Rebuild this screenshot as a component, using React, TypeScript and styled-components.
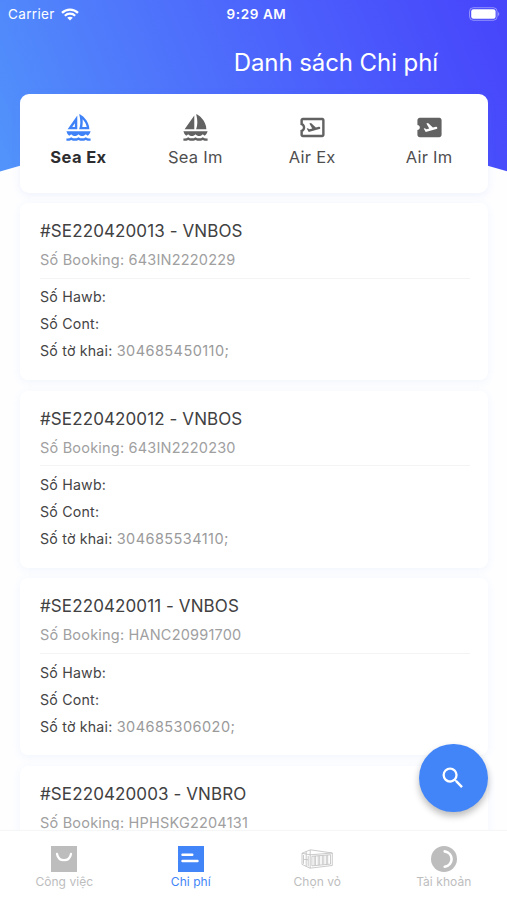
import React from "react";
import styled, { createGlobalStyle } from "styled-components";
import {
  MdAirplaneTicket,
  MdOutlineAirplaneTicket,
  MdOutlineSailing,
  MdSailing,
  MdSearch,
} from "react-icons/md";

const GlobalStyle = createGlobalStyle`
  * { box-sizing: border-box; }
  body { margin: 0; background: #fff; overflow: hidden; }
`;

const Screen = styled.div`
  position: relative;
  width: 507px;
  height: 900px;
  display: flex;
  flex-direction: column;
  overflow: hidden;
  background: #fefeff;
  font-family: Inter, "Noto Sans", sans-serif;
  color: #444445;
`;

const Header = styled.header`
  position: relative;
  flex: none;
  height: 175px;
  overflow: hidden;
  color: #fff;
  background: linear-gradient(68deg, #5194fb 0%, #507efb 24%, #4c62fc 58%, #4746fb 97%);

  &::after {
    content: "";
    position: absolute;
    left: 50%;
    top: 134px;
    width: 1760px;
    height: 1760px;
    margin-left: -880px;
    border-radius: 50%;
    background: #fefeff;
  }
`;

const StatusBar = styled.div`
  height: 28px;
  padding: 0 7px 0 8px;
  display: grid;
  grid-template-columns: 1fr auto 1fr;
  align-items: center;
`;

const Carrier = styled.span`
  display: flex;
  align-items: center;
  gap: 6px;
  font-size: 13.5px;
  letter-spacing: 0.35px;
`;

const Clock = styled.span`
  padding-left: 5px;
  font-size: 13.5px;
  font-weight: 600;
  letter-spacing: 0.6px;
`;

const BatterySlot = styled.span`
  display: flex;
  justify-content: flex-end;
`;

const Title = styled.h1`
  margin: 18.5px 69px 0 0;
  font-size: 24px;
  line-height: 32px;
  font-weight: 400;
  letter-spacing: -0.08px;
  text-align: right;
`;

const Modes = styled.nav`
  position: relative;
  flex: none;
  height: 99px;
  margin: -81px 19.5px 0 20px;
  padding-top: 19px;
  display: grid;
  grid-template-columns: repeat(4, 1fr);
  align-items: start;
  border-radius: 9px;
  background: #fff;
  box-shadow: 0 2px 9px rgba(110, 140, 240, 0.11);
`;

const Mode = styled.div<{ $active?: boolean }>`
  display: flex;
  flex-direction: column;
  align-items: center;
  gap: 5px;
  font-size: 16.5px;
  line-height: 20px;
  letter-spacing: ${(p) => (p.$active ? "0.4px" : "0.25px")};
  font-weight: ${(p) => (p.$active ? 700 : 400)};
  color: ${(p) => (p.$active ? "#2d2d2f" : "#4f4f50")};

  svg {
    width: 29px;
    height: 29px;
    color: ${(p) => (p.$active ? "#3f82f7" : "#626263")};
  }
`;

const List = styled.main`
  flex: 1;
  min-height: 0;
  overflow: hidden;
  padding: 10px 19.5px 0 20px;
  display: flex;
  flex-direction: column;
  gap: 10.7px;
`;

const Card = styled.article`
  flex: none;
  height: 177px;
  padding: 17px 18px 0 20px;
  border-radius: 8px;
  background: #fff;
  box-shadow: 0 2px 8px rgba(100, 150, 225, 0.09);
`;

const Code = styled.h2`
  margin: 0 0 7px;
  font-size: 17px;
  line-height: 23px;
  font-weight: 400;
  letter-spacing: 0.1px;
  color: #414142;
`;

const Booking = styled.p`
  margin: 0;
  padding-bottom: 7.5px;
  border-bottom: 1px solid #f4f4f6;
  font-size: 14.5px;
  line-height: 20px;
  letter-spacing: 0.2px;
  color: #a0a0a1;
`;

const Fields = styled.div`
  padding-top: 4.7px;
`;

const Field = styled.p`
  margin: 0;
  font-size: 14.2px;
  line-height: 27px;
  letter-spacing: 0.2px;
`;

const Value = styled.span`
  color: #9a9a9b;
  font-size: 14.5px;
  letter-spacing: 0.45px;
`;

const SearchButton = styled.button`
  position: absolute;
  left: 419px;
  top: 743.5px;
  width: 68.5px;
  height: 68.5px;
  padding: 0;
  display: grid;
  place-items: center;
  border: 0;
  border-radius: 50%;
  background: #4285f8;
  color: #fff;
  box-shadow: 0 4px 7px rgba(0, 0, 0, 0.27);
`;

const TabBar = styled.nav`
  flex: none;
  height: 69px;
  padding: 15px 0 0 1px;
  display: grid;
  grid-template-columns: repeat(4, 1fr);
  background: #fff;
  box-shadow: 0 -1px 1px #f5f6f8;
`;

const Tab = styled.div<{ $active?: boolean }>`
  display: flex;
  flex-direction: column;
  align-items: center;
  gap: 2px;
  font-size: 12px;
  line-height: 16px;
  letter-spacing: 0.05px;
  color: ${(p) => (p.$active ? "#4285f8" : "#bdbdbe")};
`;

const WifiIcon = () => (
  <svg width="18" height="13" viewBox="0 0 18 13" fill="none" stroke="#fff">
    <path d="M1 4.8C5.5.5 12.5.5 17 4.8" strokeWidth="2.3" />
    <path d="M3.8 7.7c3-2.8 7.4-2.8 10.4 0" strokeWidth="2.1" />
    <path d="M9 12.4 6.2 9.7c1.6-1.3 4-1.3 5.6 0z" fill="#fff" stroke="none" />
  </svg>
);

const BatteryIcon = () => (
  <svg width="31" height="14" viewBox="0 0 31 14">
    <rect x=".5" y=".7" width="27.6" height="12.6" rx="3.8" fill="none" stroke="#fff" strokeOpacity=".4" />
    <rect x="2.2" y="2.3" width="24.4" height="9.4" rx="2.2" fill="#fff" />
    <path d="M29.2 5v4c1.4-.6 1.4-3.4 0-4z" fill="#fff" fillOpacity=".5" />
  </svg>
);

const JobsIcon = () => (
  <svg width="26" height="26" viewBox="0 0 26 26">
    <path d="M0 0h26v26H0z" fill="#bdbdbe" />
    <path d="M6 8c1.6 8.2 12.4 8.2 14 0" fill="none" stroke="#fff" strokeWidth="2.3" strokeLinecap="round" />
  </svg>
);

const CostIcon = () => (
  <svg width="26" height="26" viewBox="0 0 26 26">
    <path d="M0 0h26v26H0z" fill="#4285f8" />
    <path d="M4.5 8.7h9.8M4.5 15h15" fill="none" stroke="#fff" strokeWidth="2.4" strokeLinecap="round" />
  </svg>
);

const ContainerIcon = () => (
  <svg width="32" height="26" viewBox="0 0 32 26" fill="none" stroke="#bdbdbe" strokeWidth=".8" strokeLinejoin="round">
    <path d="m1 7.3 8.3-3.5 22 3.2v12.5L9 22.2l-8-3.8zM1 7.3l8.3 1.5L31.3 7M9.2 4v18M5.2 5.6v14.7" />
    <path d="m10.9 10.3 18.6-1.6v9.4l-18.6 1.8z" />
    <path d="M13.2 10.2v9.3M14.6 10v9.3M17.2 9.8v9.3M18.7 9.7V19M21.3 9.5v9.2M22.8 9.3v9.2M25.3 9.1v9.2M26.7 9v9.1M2.5 9v8.8M7.2 9.9v10.4M3 13.4l4.1.4" />
  </svg>
);

const AccountIcon = () => (
  <svg width="26" height="26" viewBox="0 0 26 26">
    <circle cx="13" cy="13" r="13" fill="#bdbdbe" />
    <path d="M13.7 5.4c9.2 1.5 9.2 13.9 0 15.4" fill="none" stroke="#fff" strokeWidth="2.6" strokeLinecap="round" />
  </svg>
);

const modes = [
  { label: "Sea Ex", Icon: MdOutlineSailing },
  { label: "Sea Im", Icon: MdSailing },
  { label: "Air Ex", Icon: MdOutlineAirplaneTicket },
  { label: "Air Im", Icon: MdAirplaneTicket },
];

const shipments = [
  { code: "#SE220420013 - VNBOS", booking: "643IN2220229", declaration: "304685450110;" },
  { code: "#SE220420012 - VNBOS", booking: "643IN2220230", declaration: "304685534110;" },
  { code: "#SE220420011 - VNBOS", booking: "HANC20991700", declaration: "304685306020;" },
  { code: "#SE220420003 - VNBRO", booking: "HPHSKG2204131" },
];

const tabs = [
  { label: "Công việc", Icon: JobsIcon },
  { label: "Chi phí", Icon: CostIcon },
  { label: "Chọn vỏ", Icon: ContainerIcon },
  { label: "Tài khoản", Icon: AccountIcon },
];

export default function App() {
  return (
    <Screen>
      <GlobalStyle />
      <Header>
        <StatusBar>
          <Carrier>
            Carrier
            <WifiIcon />
          </Carrier>
          <Clock>9:29 AM</Clock>
          <BatterySlot>
            <BatteryIcon />
          </BatterySlot>
        </StatusBar>
        <Title>Danh sách Chi phí</Title>
      </Header>
      <Modes>
        {modes.map(({ label, Icon }, i) => (
          <Mode key={label} $active={i === 0}>
            <Icon />
            {label}
          </Mode>
        ))}
      </Modes>
      <List>
        {shipments.map((s) => (
          <Card key={s.code}>
            <Code>{s.code}</Code>
            <Booking>Số Booking: {s.booking}</Booking>
            {s.declaration && (
              <Fields>
                <Field>Số Hawb:</Field>
                <Field>Số Cont:</Field>
                <Field>
                  Số tờ khai: <Value>{s.declaration}</Value>
                </Field>
              </Fields>
            )}
          </Card>
        ))}
      </List>
      <TabBar>
        {tabs.map(({ label, Icon }, i) => (
          <Tab key={label} $active={i === 1}>
            <Icon />
            {label}
          </Tab>
        ))}
      </TabBar>
      <SearchButton aria-label="Search">
        <MdSearch size={28} />
      </SearchButton>
    </Screen>
  );
}
